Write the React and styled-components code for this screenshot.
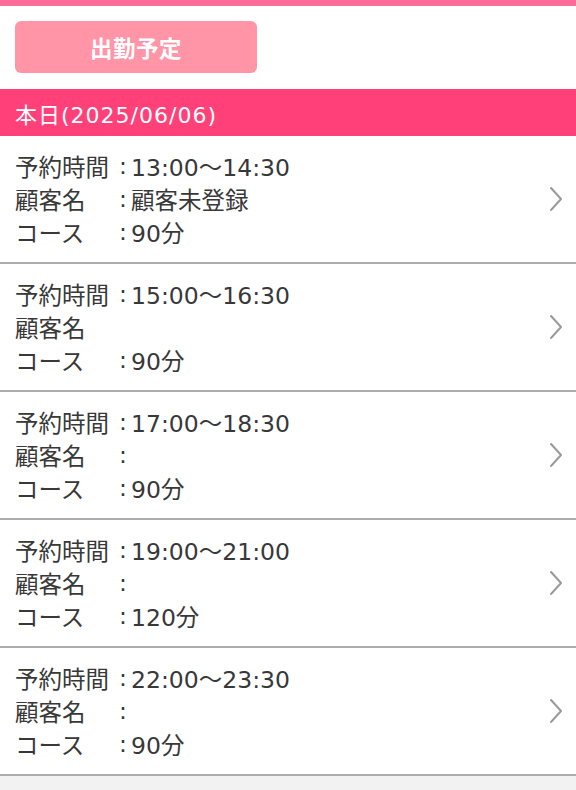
import React from "react";
import styled, { createGlobalStyle } from "styled-components";

const reservations = [
  { time: "13:00〜14:30", customer: "顧客未登録", course: "90分" },
  { time: "15:00〜16:30", customer: null, course: "90分" },
  { time: "17:00〜18:30", customer: "", course: "90分" },
  { time: "19:00〜21:00", customer: "", course: "120分" },
  { time: "22:00〜23:30", customer: "", course: "90分" },
];

const GlobalStyle = createGlobalStyle`
  html, body {
    margin: 0;
    padding: 0;
    background: #f2f2f2;
    font-family: "DejaVu Sans", "Noto Sans CJK JP", sans-serif;
  }
`;

function Chevron() {
  return (
    <svg width="16" height="26" viewBox="0 0 16 26" fill="none">
      <path d="M3 2 L13 13 L3 24" stroke="#9a9a9a" strokeWidth="2" strokeLinecap="round" strokeLinejoin="round" />
    </svg>
  );
}

export default function App() {
  return (
    <Page>
      <GlobalStyle />
      <TopStripe />
      <Toolbar>
        <ScheduleButton>出勤予定</ScheduleButton>
      </Toolbar>
      <DayHeader>本日(2025/06/06)</DayHeader>
      <List>
        {reservations.map((r) => (
          <Row key={r.time}>
            <Info>
              <Line>
                <Label>予約時間</Label>
                <Colon>:</Colon>
                <Value>{r.time}</Value>
              </Line>
              <Line>
                <Label>顧客名</Label>
                {r.customer !== null && <Colon>:</Colon>}
                <Value>{r.customer}</Value>
              </Line>
              <Line>
                <Label>コース</Label>
                <Colon>:</Colon>
                <Value>{r.course}</Value>
              </Line>
            </Info>
            <Chevron />
          </Row>
        ))}
      </List>
    </Page>
  );
}

const Page = styled.div`
  width: 576px;
  min-height: 790px;
  background: #f2f2f2;
`;

const TopStripe = styled.div`
  height: 6px;
  background: #ff6b9b;
`;

const Toolbar = styled.div`
  background: #fff;
  padding: 15px 15px 16px;
`;

const ScheduleButton = styled.button`
  display: flex;
  align-items: center;
  justify-content: center;
  width: 242px;
  height: 52px;
  border: none;
  border-radius: 6px;
  background: #ff95a7;
  color: #fff;
  font-family: "Noto Sans CJK JP", sans-serif;
  font-size: 22.5px;
  font-weight: 700;
  letter-spacing: 0.5px;
`;

const DayHeader = styled.div`
  height: 47px;
  display: flex;
  align-items: center;
  padding: 0 15px;
  background: #ff4079;
  color: #fff;
  font-size: 22px;
  letter-spacing: 1px;
`;

const List = styled.div`
  background: #fff;
`;

const Row = styled.div`
  display: flex;
  align-items: center;
  justify-content: space-between;
  padding: 13px 12px 14px 15px;
  border-bottom: 2px solid #acacac;
`;

const Info = styled.div`
  display: flex;
  flex-direction: column;
`;

const Line = styled.div`
  display: flex;
  align-items: center;
  height: 33px;
  font-size: 23.5px;
  color: #383838;
`;

const Label = styled.span`
  width: 100px;
  white-space: nowrap;
`;

const Colon = styled.span`
  width: 16px;
  text-align: center;
`;

const Value = styled.span`
  white-space: nowrap;
`;
